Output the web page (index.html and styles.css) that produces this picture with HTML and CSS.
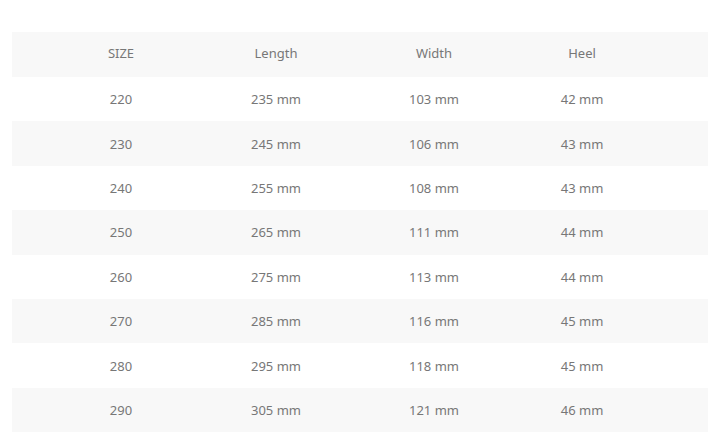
FILE: index.html
```html
<!DOCTYPE html>
<html lang="en">
<head>
<meta charset="utf-8">
<title>Size chart</title>
<link rel="stylesheet" href="styles.css">
</head>
<body>
<div class="page">
  <div class="table">
    <div class="row head"><span>SIZE</span><span>Length</span><span>Width</span><span>Heel</span></div>
    <div class="row"><span>220</span><span>235 mm</span><span>103 mm</span><span>42 mm</span></div>
    <div class="row alt"><span>230</span><span>245 mm</span><span>106 mm</span><span>43 mm</span></div>
    <div class="row"><span>240</span><span>255 mm</span><span>108 mm</span><span>43 mm</span></div>
    <div class="row alt"><span>250</span><span>265 mm</span><span>111 mm</span><span>44 mm</span></div>
    <div class="row"><span>260</span><span>275 mm</span><span>113 mm</span><span>44 mm</span></div>
    <div class="row alt"><span>270</span><span>285 mm</span><span>116 mm</span><span>45 mm</span></div>
    <div class="row"><span>280</span><span>295 mm</span><span>118 mm</span><span>45 mm</span></div>
    <div class="row alt"><span>290</span><span>305 mm</span><span>121 mm</span><span>46 mm</span></div>
  </div>
</div>
</body>
</html>
```
FILE: styles.css
```css
* { box-sizing: border-box; }
html, body { margin: 0; padding: 0; background: #fff; }
body {
  font-family: "Noto Sans", "Open Sans", sans-serif;
  font-size: 13px;
  color: #777;
}
.page {
  width: 720px;
  height: 445px;
  padding: 32px 12px 0 12px;
}
.table {
  display: flex;
  flex-direction: column;
}
.row {
  display: grid;
  grid-template-columns: 154px 156px 160px 136px;
  padding-left: 32px;
  height: 44.4px;
  align-items: center;
}
.row span { text-align: center; }
.head {
  height: 45px;
  background: #f8f8f8;
  padding-bottom: 4px;
}
.alt { background: #f8f8f8; }
```
